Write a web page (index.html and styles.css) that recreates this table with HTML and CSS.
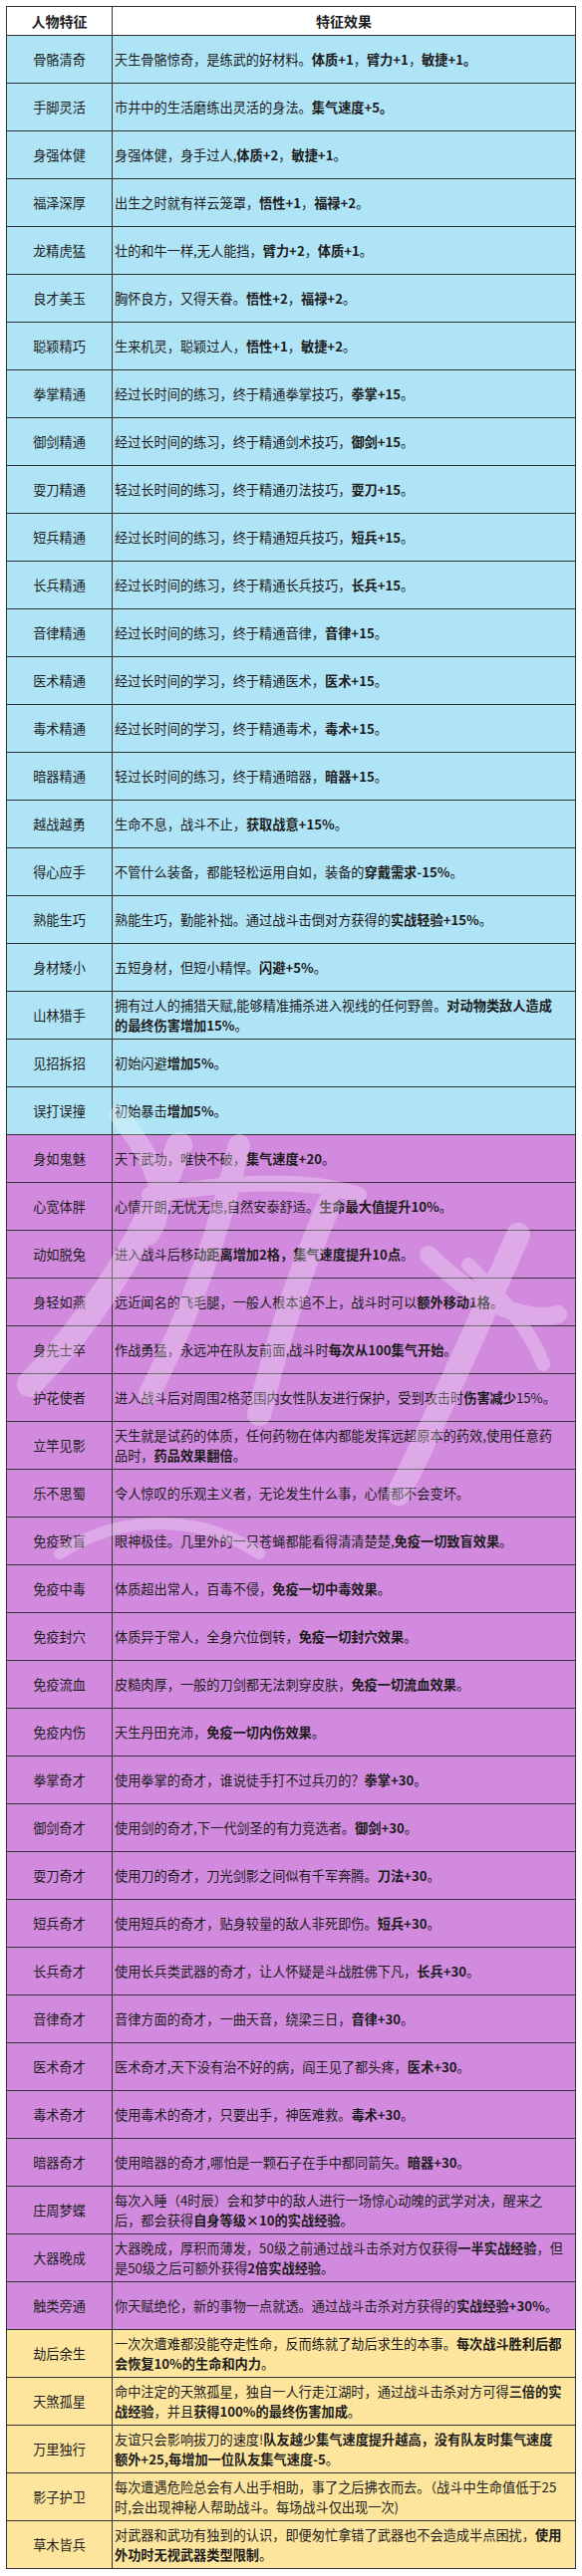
FILE: index.html
```html
<!DOCTYPE html>
<html lang="zh-CN">
<head>
<meta charset="utf-8">
<title>人物特征</title>
<link rel="stylesheet" href="styles.css">
</head>
<body>
<div class="page">
<table class="traits">
<colgroup><col class="c-name"><col class="c-desc"></colgroup>
<thead>
<tr class="head"><th>人物特征</th><th>特征效果</th></tr>
</thead>
<tbody class="blue">
<tr><td class="name">骨骼清奇</td><td class="desc">天生骨骼惊奇，是练武的好材料。<b>体质+1</b>，<b>臂力+1</b>，<b>敏捷+1。</b></td></tr>
<tr><td class="name">手脚灵活</td><td class="desc">市井中的生活磨练出灵活的身法。<b>集气速度+5。</b></td></tr>
<tr><td class="name">身强体健</td><td class="desc">身强体健，身手过人,<b>体质+2</b>，<b>敏捷+1</b>。</td></tr>
<tr><td class="name">福泽深厚</td><td class="desc">出生之时就有祥云笼罩，<b>悟性+1</b>，<b>福禄+2</b>。</td></tr>
<tr><td class="name">龙精虎猛</td><td class="desc">壮的和牛一样,无人能挡，<b>臂力+2</b>，<b>体质+1</b>。</td></tr>
<tr><td class="name">良才美玉</td><td class="desc">胸怀良方，又得天眷。<b>悟性+2</b>，<b>福禄+2</b>。</td></tr>
<tr><td class="name">聪颖精巧</td><td class="desc">生来机灵，聪颖过人，<b>悟性+1</b>，<b>敏捷+2</b>。</td></tr>
<tr><td class="name">拳掌精通</td><td class="desc">经过长时间的练习，终于精通拳掌技巧，<b>拳掌+15</b>。</td></tr>
<tr><td class="name">御剑精通</td><td class="desc">经过长时间的练习，终于精通剑术技巧，<b>御剑+15</b>。</td></tr>
<tr><td class="name">耍刀精通</td><td class="desc">轻过长时间的练习，终于精通刃法技巧，<b>耍刀+15</b>。</td></tr>
<tr><td class="name">短兵精通</td><td class="desc">经过长时间的练习，终于精通短兵技巧，<b>短兵+15</b>。</td></tr>
<tr><td class="name">长兵精通</td><td class="desc">经过长时间的练习，终于精通长兵技巧，<b>长兵+15</b>。</td></tr>
<tr><td class="name">音律精通</td><td class="desc">经过长时间的练习，终于精通音律，<b>音律+15</b>。</td></tr>
<tr><td class="name">医术精通</td><td class="desc">经过长时间的学习，终于精通医术，<b>医术+15</b>。</td></tr>
<tr><td class="name">毒术精通</td><td class="desc">经过长时间的学习，终于精通毒术，<b>毒术+15</b>。</td></tr>
<tr><td class="name">暗器精通</td><td class="desc">轻过长时间的练习，终于精通暗器，<b>暗器+15</b>。</td></tr>
<tr><td class="name">越战越勇</td><td class="desc">生命不息，战斗不止，<b>获取战意+15%</b>。</td></tr>
<tr><td class="name">得心应手</td><td class="desc">不管什么装备，都能轻松运用自如，装备的<b>穿戴需求-15%</b>。</td></tr>
<tr><td class="name">熟能生巧</td><td class="desc">熟能生巧，勤能补拙。通过战斗击倒对方获得的<b>实战轻验+15%</b>。</td></tr>
<tr><td class="name">身材矮小</td><td class="desc">五短身材，但短小精悍。<b>闪避+5%</b>。</td></tr>
<tr><td class="name">山林猎手</td><td class="desc">拥有过人的捕猎天赋,能够精准捕杀进入视线的任何野兽。<b>对动物类敌人造成<br>的最终伤害增加15%</b>。</td></tr>
<tr><td class="name">见招拆招</td><td class="desc">初始闪避<b>增加5%</b>。</td></tr>
<tr><td class="name">误打误撞</td><td class="desc">初始暴击<b>增加5%</b>。</td></tr>
</tbody>
<tbody class="purple">
<tr><td class="name">身如鬼魅</td><td class="desc">天下武功，唯快不破，<b>集气速度+20</b>。</td></tr>
<tr><td class="name">心宽体胖</td><td class="desc">心情开朗,无忧无虑,自然安泰舒适。<b>生命最大值提升10%</b>。</td></tr>
<tr><td class="name">动如脱兔</td><td class="desc">进入战斗后移<b>动距离增加2格，集气速度提升10点</b>。</td></tr>
<tr><td class="name">身轻如燕</td><td class="desc">远近闻名的飞毛腿，一般人根本追不上，战斗时可以<b>额外移动1格</b>。</td></tr>
<tr><td class="name">身先士卒</td><td class="desc">作战勇猛，永远冲在队友前面,战斗时<b>每次从100集气开始</b>。</td></tr>
<tr><td class="name">护花使者</td><td class="desc">进入战斗后对周围2格范围内女性队友进行保护，受到攻击时<b>伤害减少</b>15%。</td></tr>
<tr><td class="name">立竿见影</td><td class="desc">天生就是试药的体质，任何药物在体内都能发挥远超原本的药效,使用任意药<br>品时，<b>药品效果翻倍</b>。</td></tr>
<tr><td class="name">乐不思蜀</td><td class="desc">令人惊叹的乐观主义者，无论发生什么事，心情都不会变坏。</td></tr>
<tr><td class="name">免疫致盲</td><td class="desc">眼神极佳。几里外的一只苍蝇都能看得清清楚楚,<b>免疫一切致盲效果</b>。</td></tr>
<tr><td class="name">免疫中毒</td><td class="desc">体质超出常人，百毒不侵，<b>免疫一切中毒效果</b>。</td></tr>
<tr><td class="name">免疫封穴</td><td class="desc">体质异于常人，全身穴位倒转，<b>免疫一切封穴效果</b>。</td></tr>
<tr><td class="name">免疫流血</td><td class="desc">皮糙肉厚，一般的刀剑都无法刺穿皮肤，<b>免疫一切流血效果</b>。</td></tr>
<tr><td class="name">免疫内伤</td><td class="desc">天生丹田充沛，<b>免疫一切内伤效果</b>。</td></tr>
<tr><td class="name">拳掌奇才</td><td class="desc">使用拳掌的奇才，谁说徒手打不过兵刃的？<b>拳掌+30</b>。</td></tr>
<tr><td class="name">御剑奇才</td><td class="desc">使用剑的奇才,下一代剑圣的有力竞选者。<b>御剑+30</b>。</td></tr>
<tr><td class="name">耍刀奇才</td><td class="desc">使用刀的奇才，刀光剑影之间似有千军奔腾。<b>刀法+30</b>。</td></tr>
<tr><td class="name">短兵奇才</td><td class="desc">使用短兵的奇才，贴身较量的敌人非死即伤。<b>短兵+30</b>。</td></tr>
<tr><td class="name">长兵奇才</td><td class="desc">使用长兵类武器的奇才，让人怀疑是斗战胜佛下凡，<b>长兵+30</b>。</td></tr>
<tr><td class="name">音律奇才</td><td class="desc">音律方面的奇才，一曲天音，绕梁三日，<b>音律+30</b>。</td></tr>
<tr><td class="name">医术奇才</td><td class="desc">医术奇才,天下没有治不好的病，阎王见了都头疼，<b>医术+30</b>。</td></tr>
<tr><td class="name">毒术奇才</td><td class="desc">使用毒术的奇才，只要出手，神医难救。<b>毒术+30</b>。</td></tr>
<tr><td class="name">暗器奇才</td><td class="desc">使用暗器的奇才,哪怕是一颗石子在手中都同箭矢。<b>暗器+30</b>。</td></tr>
<tr><td class="name">庄周梦蝶</td><td class="desc">每次入睡（4时辰）会和梦中的敌人进行一场惊心动魄的武学对决，醒来之<br>后，都会获得<b>自身等级×10的实战经验</b>。</td></tr>
<tr><td class="name">大器晚成</td><td class="desc">大器晚成，厚积而薄发，50级之前通过战斗击杀对方仅获得<b>一半实战经验</b>，但<br>是50级之后可额外获得<b>2倍实战经验</b>。</td></tr>
<tr><td class="name">触类旁通</td><td class="desc">你天赋绝伦，新的事物一点就透。通过战斗击杀对方获得的<b>实战经验+30%</b>。</td></tr>
</tbody>
<tbody class="yellow">
<tr><td class="name">劫后余生</td><td class="desc">一次次遭难都没能夺走性命，反而练就了劫后求生的本事。<b>每次战斗胜利后都<br>会恢复10%的生命和内力</b>。</td></tr>
<tr><td class="name">天煞孤星</td><td class="desc">命中注定的天煞孤星，独自一人行走江湖时，通过战斗击杀对方可得<b>三倍的实<br>战经验</b>，并且<b>获得100%的最终伤害加成</b>。</td></tr>
<tr><td class="name">万里独行</td><td class="desc">友谊只会影响拔刀的速度!<b>队友越少集气速度提升越高，没有队友时集气速度<br>额外+25,每增加一位队友集气速度-5</b>。</td></tr>
<tr><td class="name">影子护卫</td><td class="desc">每次遭遇危险总会有人出手相助，事了之后拂衣而去。（战斗中生命值低于25<br>时,会出现神秘人帮助战斗。每场战斗仅出现一次)</td></tr>
<tr><td class="name">草木皆兵</td><td class="desc">对武器和武功有独到的认识，即便匆忙拿错了武器也不会造成半点困扰，<b>使用<br>外功时无视武器类型限制</b>。</td></tr>
</tbody>
</table>
<svg class="watermark" width="584" height="700" viewBox="0 0 584 700" aria-hidden="true">
<g fill="none" stroke="#ffffff" stroke-linecap="round" stroke-linejoin="round">
<path d="M120 120 C 150 160, 175 200, 150 240" stroke-width="20"/>
<path d="M180 150 C 140 260, 80 340, 30 390" stroke-width="26"/>
<path d="M240 150 C 220 240, 190 320, 150 400" stroke-width="22"/>
<path d="M150 200 C 220 190, 300 180, 360 200" stroke-width="16"/>
<path d="M330 210 C 300 280, 280 340, 260 420" stroke-width="24"/>
<path d="M430 260 C 470 300, 520 330, 560 320" stroke-width="18"/>
<path d="M520 240 C 480 330, 440 420, 400 500" stroke-width="24"/>
<path d="M470 270 C 500 300, 530 330, 545 370" stroke-width="14"/>
<path d="M60 560 C 120 520, 200 520, 260 560" stroke-width="12"/>
</g>
</svg>
</div>
</body>
</html>
```
FILE: styles.css
```css
html, body {
  margin: 0;
  padding: 0;
  background: #ffffff;
}

body {
  font-family: "Noto Sans CJK SC", "Noto Sans", sans-serif;
  color: #1c1c1c;
}

.page {
  position: relative;
  padding: 6px 0 0 6px;
  width: 578px;
}

.traits {
  border-collapse: collapse;
  table-layout: fixed;
  width: 571px;
  border: 1px solid #222222;
}

.c-name { width: 106px; }
.c-desc { width: 465px; }

.traits th,
.traits td {
  border: 1px solid #333333;
  padding: 0;
  vertical-align: middle;
}

.head th {
  height: 28px;
  background: #ffffff;
  font-size: 14px;
  font-weight: 700;
  text-align: center;
  line-height: 20px;
}

.traits td {
  height: 47px;
  font-size: 13.2px;
  line-height: 20px;
}

.name {
  text-align: center;
  font-weight: 400;
}

.desc {
  text-align: left;
  padding-left: 2px !important;
  white-space: nowrap;
  overflow: hidden;
}

.desc b {
  font-weight: 700;
}

.blue td { background: #afe3f6; }
.purple td { background: #d18ade; }
.yellow td { background: #fde59d; }

.watermark {
  position: absolute;
  left: 0;
  top: 1000px;
  opacity: 0.28;
  pointer-events: none;
}
```
